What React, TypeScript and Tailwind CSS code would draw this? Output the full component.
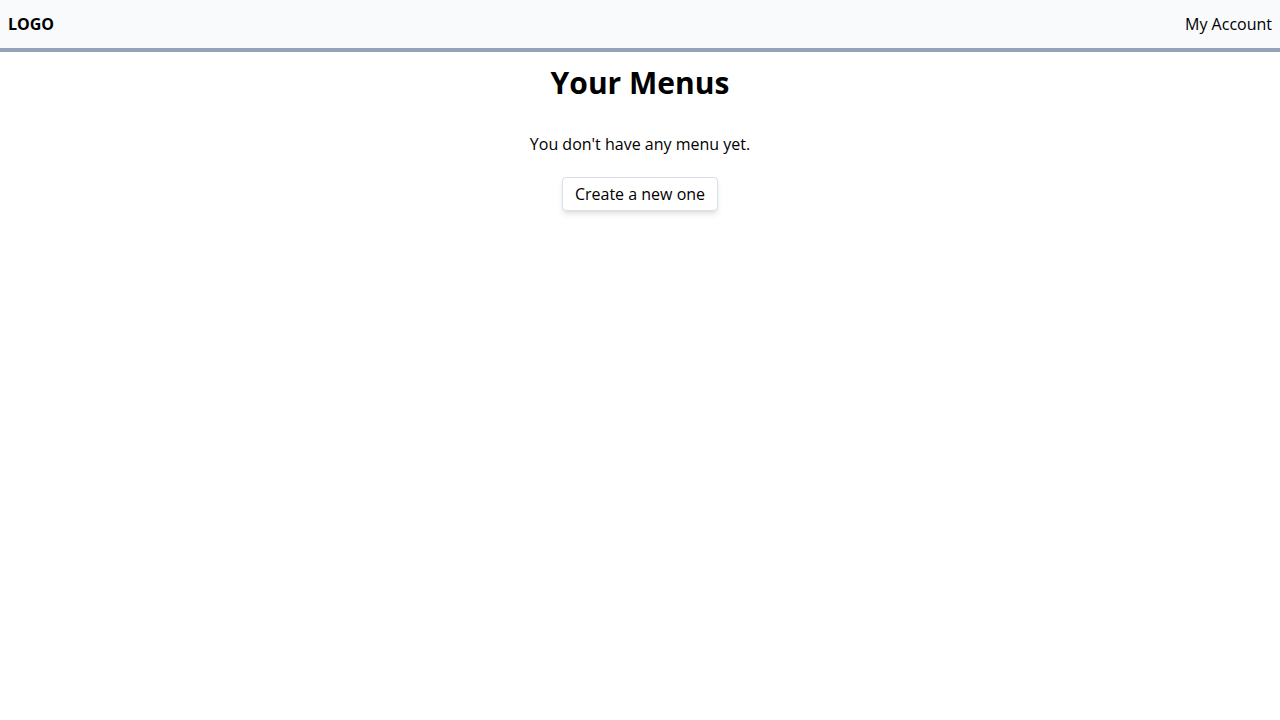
export default function App() {
  return (
    <div className="min-h-screen bg-white text-black" style={{ fontFamily: '"Open Sans", "Noto Sans", sans-serif' }}>
      {/* Top bar */}
      <header className="h-[52px] flex items-center justify-between px-2 bg-[#f8fafc] border-b-4 border-[#94a3b8]">
        <span className="font-bold text-base">LOGO</span>
        <span className="text-base">My Account</span>
      </header>
      <main className="flex flex-col items-center">
        <h1 className="mt-[13px] text-3xl font-bold leading-9">Your Menus</h1>
        <p className="mt-[31px] text-base leading-6">You don't have any menu yet.</p>
        <button className="mt-[21px] px-3 py-1 text-base leading-6 bg-white border border-[#d8dfea] rounded shadow-md">
          Create a new one
        </button>
      </main>
    </div>
  );
}
